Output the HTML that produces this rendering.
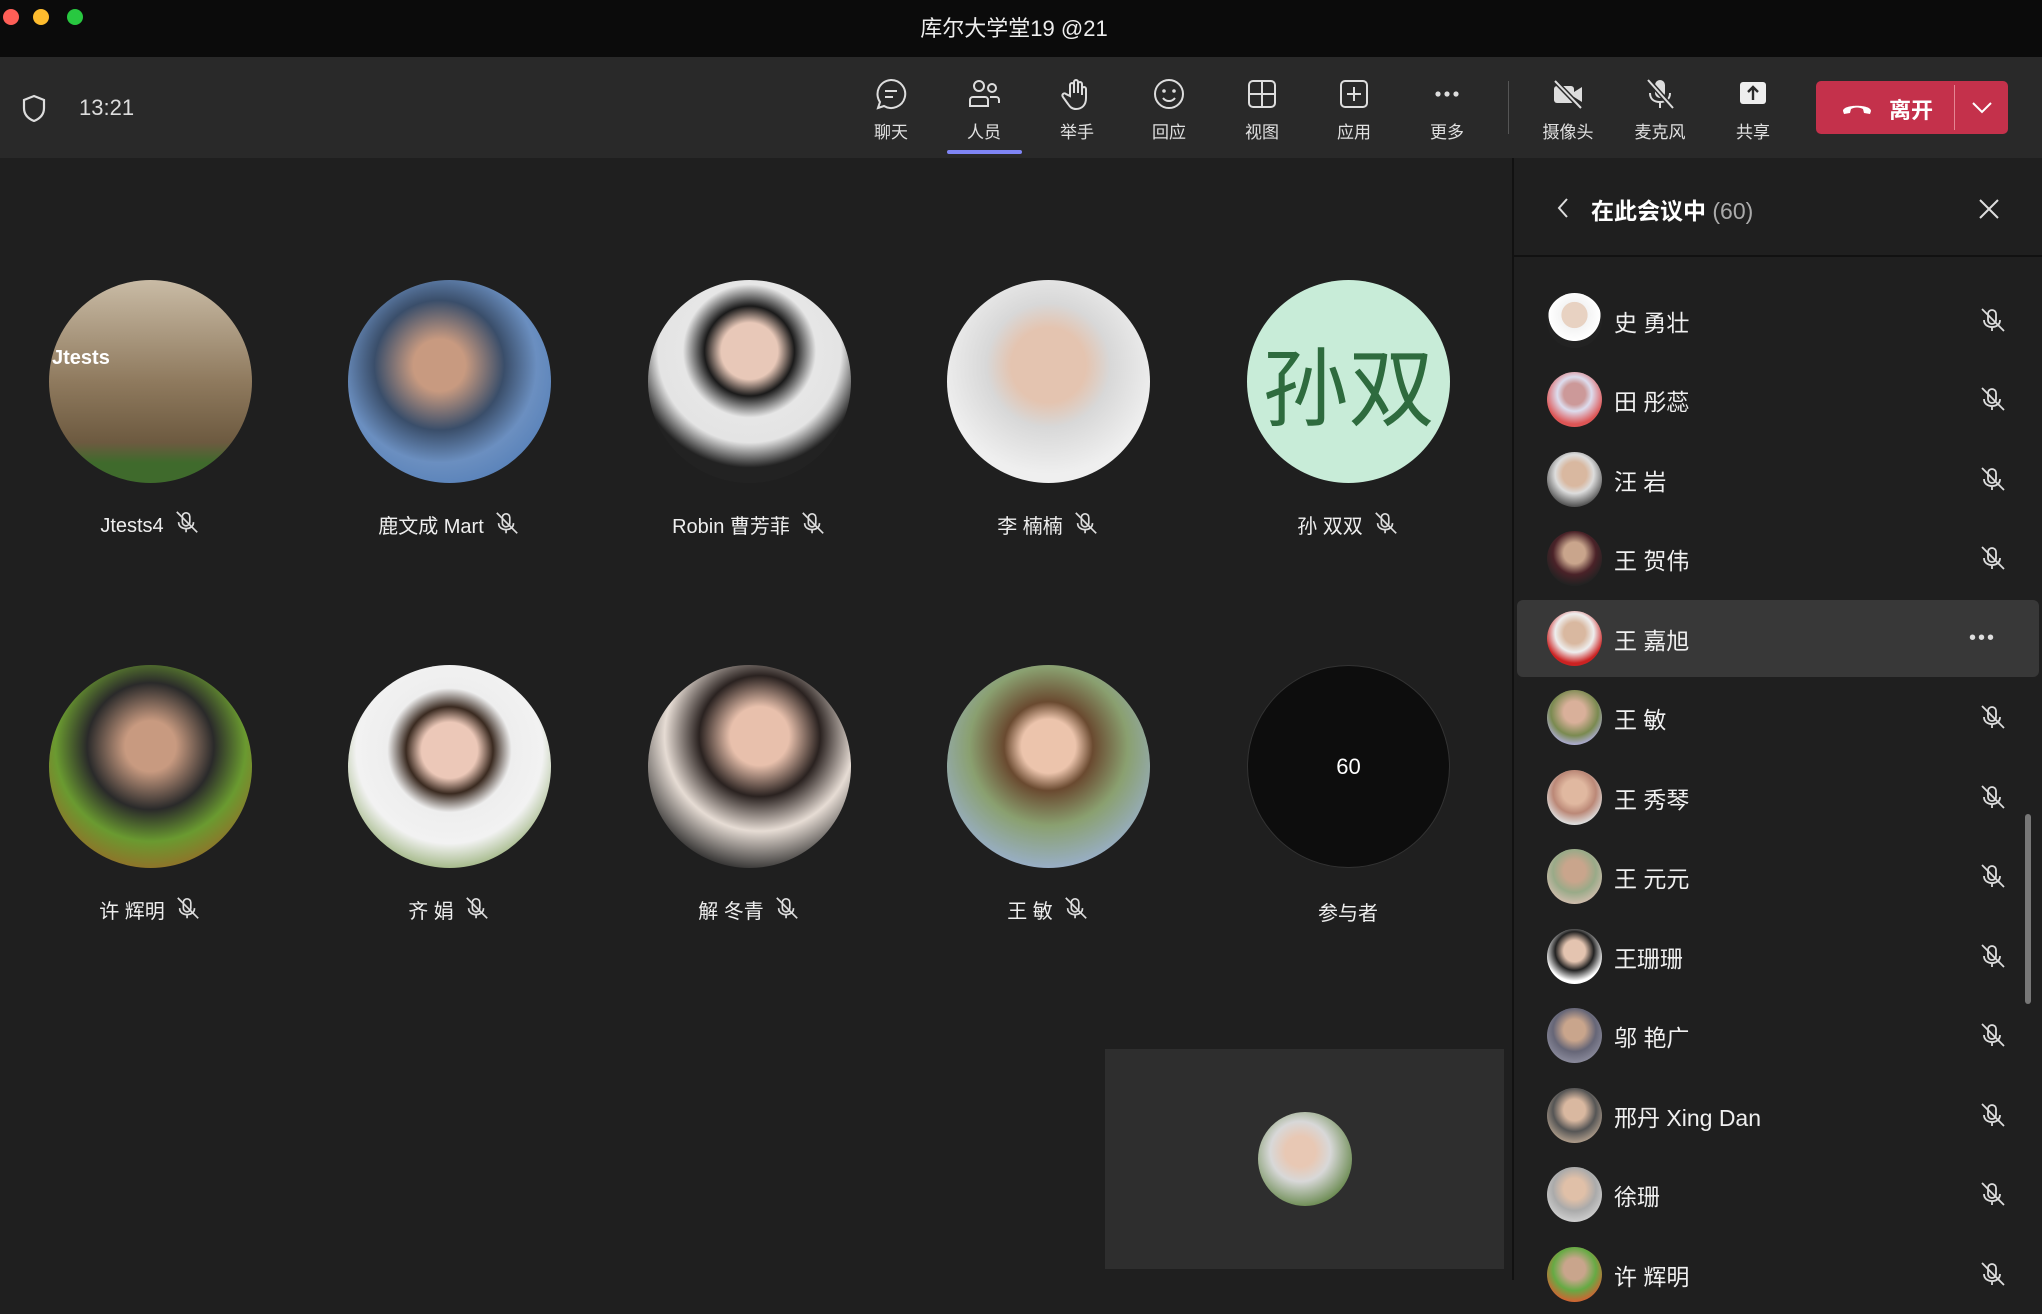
<!DOCTYPE html>
<html><head><meta charset="utf-8"><style>
*{margin:0;padding:0;box-sizing:border-box}
body{width:2042px;height:1280px;background:#1f1f1f;font-family:"Liberation Sans","Noto Sans CJK SC",sans-serif;color:#fff;position:relative;overflow:hidden}
.abs{position:absolute}
.tb{left:0;top:0;width:2042px;height:57px;background:#0b0b0b}
.tool{left:0;top:57px;width:2042px;height:101px;background:#292929}
.ti{position:absolute;top:76px;width:80px;margin-left:-40px;text-align:center;font-size:17px;color:#e0e0e0}
.ti svg{display:block;margin:0 auto 6px}
.av{position:absolute;border-radius:50%;overflow:hidden}
.nm{position:absolute;width:300px;margin-left:-150px;text-align:center;font-size:20px;color:#eee}
.nm svg{vertical-align:-4px;margin-left:10px}
.row{position:absolute;left:1517px;width:522px;height:79px}
.row .a{position:absolute;left:30px;top:12px;width:55px;height:55px;border-radius:50%}
.row .n{position:absolute;left:97px;top:23px;font-size:23px;color:#f0f0f0}
.row svg{position:absolute;left:462px;top:26px}
</style></head><body>
<div class="abs tb"></div>
<div class="abs" style="left:3px;top:9px;width:16px;height:16px;border-radius:50%;background:#fe5f57"></div>
<div class="abs" style="left:33px;top:9px;width:16px;height:16px;border-radius:50%;background:#febc2e"></div>
<div class="abs" style="left:67px;top:9px;width:16px;height:16px;border-radius:50%;background:#28c840"></div>
<div class="abs" style="left:0;width:2028px;top:11px;text-align:center;font-size:22px;color:#eee">库尔大学堂19 @21</div>
<div class="abs tool"></div>
<svg class="abs" style="left:22px;top:94px" width="24" height="28" viewBox="0 0 24 28"><path d="M12 2 L22 6 V14 C22 21 17 25 12 27 C7 25 2 21 2 14 V6 Z" fill="none" stroke="#ddd" stroke-width="2.2"/></svg>
<div class="abs" style="left:79px;top:95px;font-size:22px;color:#ddd">13:21</div>

<div class="ti" style="left:891px"><svg width="36" height="36" viewBox="0 0 36 36"><path d="M18 4a14 14 0 1 1-7 26l-6 2 2-6A14 14 0 0 1 18 4z" fill="none" stroke="#ddd" stroke-width="2"/><path d="M12 15h12M12 21h8" stroke="#ddd" stroke-width="2"/></svg>聊天</div>
<div class="ti" style="left:984px"><svg width="36" height="36" viewBox="0 0 36 36"><circle cx="13" cy="10" r="5" fill="none" stroke="#ddd" stroke-width="2"/><circle cx="26" cy="12" r="4" fill="none" stroke="#ddd" stroke-width="2"/><path d="M4 30v-6a3 3 0 0 1 3-3h12a3 3 0 0 1 3 3v6zM24 21h6a3 3 0 0 1 3 3v3" fill="none" stroke="#ddd" stroke-width="2"/></svg>人员</div>
<div class="ti" style="left:1077px"><svg width="36" height="36" viewBox="0 0 36 36"><path d="M11 20V9a2 2 0 0 1 4 0v8V6a2 2 0 0 1 4 0v11V8a2 2 0 0 1 4 0v11v-6a2 2 0 0 1 4 0v9c0 7-4 11-10 11c-4 0-6-2-8-5l-5-7a2 2 0 0 1 3-3z" fill="none" stroke="#ddd" stroke-width="2"/></svg>举手</div>
<div class="ti" style="left:1169px"><svg width="36" height="36" viewBox="0 0 36 36"><circle cx="18" cy="18" r="14" fill="none" stroke="#ddd" stroke-width="2"/><circle cx="13" cy="15" r="1.8" fill="#ddd"/><circle cx="23" cy="15" r="1.8" fill="#ddd"/><path d="M12 22c3 4 9 4 12 0" fill="none" stroke="#ddd" stroke-width="2"/></svg>回应</div>
<div class="ti" style="left:1262px"><svg width="36" height="36" viewBox="0 0 36 36"><rect x="5" y="5" width="26" height="26" rx="4" fill="none" stroke="#ddd" stroke-width="2"/><path d="M18 5v26M5 18h26" stroke="#ddd" stroke-width="2"/></svg>视图</div>
<div class="ti" style="left:1354px"><svg width="36" height="36" viewBox="0 0 36 36"><rect x="5" y="5" width="26" height="26" rx="4" fill="none" stroke="#ddd" stroke-width="2"/><path d="M18 11v14M11 18h14" stroke="#ddd" stroke-width="2"/></svg>应用</div>
<div class="ti" style="left:1447px"><svg width="36" height="36" viewBox="0 0 36 36"><circle cx="9" cy="18" r="2.6" fill="#ddd"/><circle cx="18" cy="18" r="2.6" fill="#ddd"/><circle cx="27" cy="18" r="2.6" fill="#ddd"/></svg>更多</div>
<div class="abs" style="left:947px;top:150px;width:75px;height:4px;border-radius:2px;background:#7f85f5"></div>
<div class="abs" style="left:1508px;top:81px;width:1px;height:53px;background:#555"></div>
<div class="ti" style="left:1568px"><svg width="36" height="36" viewBox="0 0 36 36"><rect x="4" y="10" width="20" height="17" rx="3" fill="#ddd"/><path d="M24 16l8-5v15l-8-5z" fill="#ddd"/><path d="M5 5l26 27" stroke="#292929" stroke-width="5"/><path d="M5 5l26 27" stroke="#ddd" stroke-width="2"/></svg>摄像头</div>
<div class="ti" style="left:1660px"><svg width="36" height="36" viewBox="0 0 36 36"><rect x="13" y="4" width="10" height="18" rx="5" fill="#ddd"/><path d="M8 17c0 6 4 9 10 9s10-3 10-9M18 26v6" fill="none" stroke="#ddd" stroke-width="2"/><path d="M6 4l25 28" stroke="#292929" stroke-width="5"/><path d="M6 4l25 28" stroke="#ddd" stroke-width="2"/></svg>麦克风</div>
<div class="ti" style="left:1753px"><svg width="36" height="36" viewBox="0 0 36 36"><rect x="5" y="6" width="26" height="22" rx="3" fill="#eee"/><path d="M18 24V11M13 16l5-5 5 5" fill="none" stroke="#292929" stroke-width="2.4"/></svg>共享</div>
<div class="abs" style="left:1816px;top:81px;width:192px;height:53px;border-radius:5px;background:#c4314b"></div>
<div class="abs" style="left:1954px;top:85px;width:1px;height:45px;background:#e58593"></div>
<svg class="abs" style="left:1840px;top:96px" width="34" height="22" viewBox="0 0 34 22"><path d="M3 15c0-7 28-7 28 0l-1 3-6-1-1-4c-4-2-8-2-12 0l-1 4-6 1z" fill="#fff"/></svg>
<div class="abs" style="left:1889px;top:93px;font-size:22px;font-weight:bold">离开</div>
<svg class="abs" style="left:1970px;top:99px" width="24" height="16" viewBox="0 0 24 16"><path d="M3 4l9 9 9-9" fill="none" stroke="#fff" stroke-width="2"/></svg>

<div class="abs" style="left:1512px;top:158px;width:2px;height:1122px;background:#111"></div>
<div class="abs" style="left:1514px;top:255px;width:528px;height:2px;background:#111"></div>
<svg class="abs" style="left:1556px;top:196px" width="14" height="24" viewBox="0 0 14 24"><path d="M11 3L3 12l8 9" fill="none" stroke="#ddd" stroke-width="2"/></svg>
<div class="abs" style="left:1591px;top:192px;font-size:23px;font-weight:bold">在此会议中 <span style="font-weight:normal;color:#aaa">(60)</span></div>
<svg class="abs" style="left:1978px;top:198px" width="22" height="22" viewBox="0 0 22 22"><path d="M2 2l18 18M20 2L2 20" stroke="#ddd" stroke-width="2"/></svg>
<div class="abs" style="left:1517px;top:600px;width:522px;height:77px;border-radius:6px;background:#383838"></div>
<div class="abs" style="left:2025px;top:814px;width:6px;height:190px;border-radius:3px;background:#777"></div>

<svg width="0" height="0" style="position:absolute"><defs><g id="mo"><rect x="9" y="3" width="8" height="14" rx="4" fill="none" stroke="#ddd" stroke-width="1.8"/><path d="M5 13c0 5 4 7 8 7s8-2 8-7M13 20v4" fill="none" stroke="#ddd" stroke-width="1.8"/><path d="M3 2l22 22" stroke="#ddd" stroke-width="1.8"/></g></defs></svg>

<div class="row" style="top:281px"><div class="a" style="background:radial-gradient(circle at 50% 40%,#e8d2c2 30%,#f4f4f4 31%,#fff 60%,#222 61%)"></div><div class="n">史 勇壮</div><svg width="28" height="28"><use href="#mo"/></svg></div>
<div class="row" style="top:360px"><div class="a" style="background:radial-gradient(circle at 50% 40%,#c99 25%,#dde 40%,#d55 70%)"></div><div class="n">田 彤蕊</div><svg width="28" height="28"><use href="#mo"/></svg></div>
<div class="row" style="top:440px"><div class="a" style="background:radial-gradient(circle at 50% 40%,#d9b8a0 28%,#ddd 45%,#555 75%)"></div><div class="n">汪 岩</div><svg width="28" height="28"><use href="#mo"/></svg></div>
<div class="row" style="top:519px"><div class="a" style="background:radial-gradient(circle at 50% 40%,#c9a58c 25%,#4a2228 50%,#222 75%)"></div><div class="n">王 贺伟</div><svg width="28" height="28"><use href="#mo"/></svg></div>
<div class="row" style="top:599px"><div class="a" style="background:radial-gradient(circle at 50% 40%,#d9b8a0 25%,#eee 45%,#c22 70%)"></div><div class="n">王 嘉旭</div><div class="abs" style="left:452px;top:36px;font-size:20px;letter-spacing:2px;color:#ddd;line-height:6px">•••</div></div>
<div class="row" style="top:678px"><div class="a" style="background:radial-gradient(circle at 50% 40%,#d9b09a 25%,#7a8a50 55%,#aac 75%)"></div><div class="n">王 敏</div><svg width="28" height="28"><use href="#mo"/></svg></div>
<div class="row" style="top:758px"><div class="a" style="background:radial-gradient(circle at 50% 40%,#e0b8a0 28%,#b87 50%,#ddd 75%)"></div><div class="n">王 秀琴</div><svg width="28" height="28"><use href="#mo"/></svg></div>
<div class="row" style="top:837px"><div class="a" style="background:radial-gradient(circle at 50% 40%,#c9a58c 25%,#9a8 50%,#cba 75%)"></div><div class="n">王 元元</div><svg width="28" height="28"><use href="#mo"/></svg></div>
<div class="row" style="top:917px"><div class="a" style="background:radial-gradient(circle at 50% 40%,#e4c4b0 25%,#222 45%,#fff 70%)"></div><div class="n">王珊珊</div><svg width="28" height="28"><use href="#mo"/></svg></div>
<div class="row" style="top:996px"><div class="a" style="background:radial-gradient(circle at 50% 40%,#c9a58c 25%,#667 50%,#889 75%)"></div><div class="n">邬 艳广</div><svg width="28" height="28"><use href="#mo"/></svg></div>
<div class="row" style="top:1076px"><div class="a" style="background:radial-gradient(circle at 50% 40%,#d9b8a0 25%,#555 50%,#a98 75%)"></div><div class="n">邢丹 Xing Dan</div><svg width="28" height="28"><use href="#mo"/></svg></div>
<div class="row" style="top:1155px"><div class="a" style="background:radial-gradient(circle at 50% 40%,#e0c0a8 25%,#aaa 50%,#ccc 75%)"></div><div class="n">徐珊</div><svg width="28" height="28"><use href="#mo"/></svg></div>
<div class="row" style="top:1235px"><div class="a" style="background:radial-gradient(circle at 50% 40%,#c9a58c 25%,#6a4 50%,#c63 75%)"></div><div class="n">许 辉明</div><svg width="28" height="28"><use href="#mo"/></svg></div>

<div class="av" style="left:49px;top:280px;width:203px;height:203px;background:linear-gradient(180deg,#c9bba5 0%,#8f7a5e 50%,#6d5a40 80%,#3f6a2c 90%)"></div>
<div class="abs" style="left:52px;top:347px;font-size:20px;font-weight:bold;color:#fff">Jtests</div>
<div class="av" style="left:348px;top:280px;width:203px;height:203px;background:radial-gradient(circle at 45% 42%,#c89a80 16%,#3a4e6a 40%,#6b8fc0 60%,#4070b0 100%)"></div>
<div class="av" style="left:648px;top:280px;width:203px;height:203px;background:radial-gradient(circle at 50% 35%,#e8c8b8 17%,#1a1a1a 27%,#e6e6e6 40%,#e4e4e4 55%,#222 70%)"></div>
<div class="av" style="left:947px;top:280px;width:203px;height:203px;background:radial-gradient(circle at 50% 42%,#e4c4b0 24%,#d8d8d8 40%,#efefef 70%)"></div>
<div class="av" style="left:1247px;top:280px;width:203px;height:203px;background:#c8ecd8;text-align:center;line-height:203px;font-size:86px;color:#2e6b3e;font-family:'Noto Sans CJK SC',sans-serif">孙双</div>
<div class="nm" style="left:150px;top:510px">Jtests4<svg width="26" height="26" viewBox="0 0 28 28"><use href="#mo"/></svg></div>
<div class="nm" style="left:449px;top:510px">鹿文成 Mart<svg width="26" height="26" viewBox="0 0 28 28"><use href="#mo"/></svg></div>
<div class="nm" style="left:749px;top:510px">Robin 曹芳菲<svg width="26" height="26" viewBox="0 0 28 28"><use href="#mo"/></svg></div>
<div class="nm" style="left:1048px;top:510px">李 楠楠<svg width="26" height="26" viewBox="0 0 28 28"><use href="#mo"/></svg></div>
<div class="nm" style="left:1348px;top:510px">孙 双双<svg width="26" height="26" viewBox="0 0 28 28"><use href="#mo"/></svg></div>

<div class="av" style="left:49px;top:665px;width:203px;height:203px;background:radial-gradient(circle at 50% 40%,#c89a80 16%,#2a2a2a 40%,#6a9a30 60%,#c04020 100%)"></div>
<div class="av" style="left:348px;top:665px;width:203px;height:203px;background:radial-gradient(circle at 50% 42%,#ecc8b8 18%,#3a2a20 28%,#eee 40%,#f2f2f2 60%,#7a9a50 85%)"></div>
<div class="av" style="left:648px;top:665px;width:203px;height:203px;background:radial-gradient(circle at 55% 35%,#e8c0ac 17%,#2a2220 35%,#e6dcd4 55%,#222 80%)"></div>
<div class="av" style="left:947px;top:665px;width:203px;height:203px;background:radial-gradient(circle at 50% 40%,#ecc4ac 17%,#6a4a30 28%,#8aa070 50%,#9ab0d0 80%)"></div>
<div class="av" style="left:1247px;top:665px;width:203px;height:203px;background:#0d0d0d;border:1px solid #333;text-align:center;line-height:201px;font-size:22px">60</div>
<div class="nm" style="left:150px;top:895px">许 辉明<svg width="26" height="26" viewBox="0 0 28 28"><use href="#mo"/></svg></div>
<div class="nm" style="left:449px;top:895px">齐 娟<svg width="26" height="26" viewBox="0 0 28 28"><use href="#mo"/></svg></div>
<div class="nm" style="left:749px;top:895px">解 冬青<svg width="26" height="26" viewBox="0 0 28 28"><use href="#mo"/></svg></div>
<div class="nm" style="left:1048px;top:895px">王 敏<svg width="26" height="26" viewBox="0 0 28 28"><use href="#mo"/></svg></div>
<div class="nm" style="left:1348px;top:897px">参与者</div>

<div class="abs" style="left:1105px;top:1049px;width:399px;height:220px;background:#2e2e2e"></div>
<div class="av" style="left:1258px;top:1112px;width:94px;height:94px;background:radial-gradient(circle at 45% 42%,#e8c8b4 20%,#d8d8d8 40%,#6a8a50 75%)"></div>
</body></html>
